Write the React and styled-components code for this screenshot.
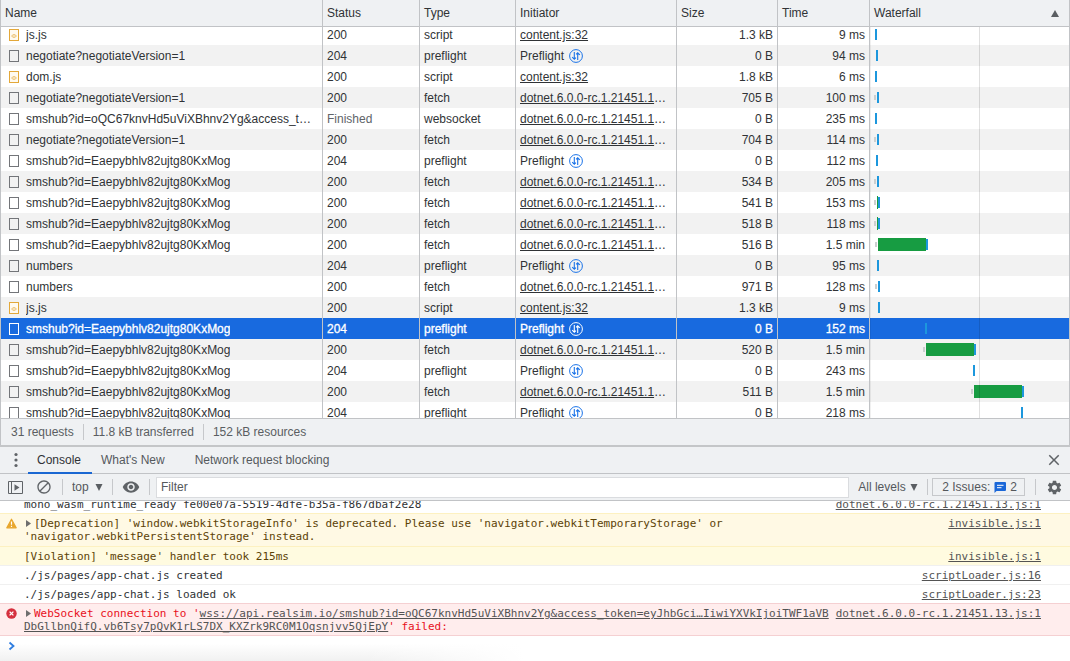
//imports
import React, { useState, useLayoutEffect, useRef } from "react"
import styled, { createGlobalStyle, css } from "styled-components"
import { MdBlock, MdClose, MdSettings, MdVisibility } from "react-icons/md"
//end of imports

const GlobalStyle = createGlobalStyle`
  * {
    box-sizing: border-box;
  }
  body {
    margin: 0;
    background: #fff;
    color: #303336;
    font-family: "Liberation Sans", Arial, sans-serif;
    font-size: 12px;
  }
  button, input, select {
    font: inherit;
    color: inherit;
  }
`

const line = "#c1c3c6"
const bar = "#eff1f3"

//page shell
const Shell = styled.div`
  height: 100vh;
  display: flex;
  flex-direction: column;
  overflow: hidden;
`
const NetworkPanel = styled.section`
  flex: 1;
  min-height: 0;
  display: flex;
  flex-direction: column;
  border-left: 1px solid ${line};
  border-right: 1px solid ${line};
`

//request table
const Scroller = styled.div`
  flex: 1;
  min-height: 0;
  overflow-y: auto;
  scrollbar-width: none;
`
const Table = styled.table`
  width: 100%;
  table-layout: fixed;
  border-collapse: separate;
  border-spacing: 0;
`
const Col = styled.col`
  width: ${(p) => (p.$width ? `${p.$width}px` : "auto")};
`
const HeadCell = styled.th`
  position: sticky;
  top: 0;
  z-index: 1;
  height: 27px;
  padding: 0 4px;
  background: ${bar};
  border-right: 1px solid ${line};
  border-bottom: 1px solid ${line};
  font-weight: 400;
  text-align: left;
  &:last-child {
    border-right: 0;
  }
`
const HeadLabel = styled.div`
  display: flex;
  align-items: center;
  justify-content: space-between;
  padding-right: 6px;
`
const Row = styled.tr`
  height: 21px;
  background: ${(p) => (p.$selected ? "#186adf" : "#fff")};
  color: ${(p) => (p.$selected ? "#fff" : "inherit")};
  -webkit-text-stroke: ${(p) => (p.$selected ? "0.3px #fff" : "0")};
  --icon: ${(p) => (p.$selected ? "#fff" : "#1a73e8")};
  --file: ${(p) => (p.$selected ? "#fff" : "#737579")};
  &:nth-child(even) {
    background: #f2f2f2;
  }
  ${(p) =>
    p.$selected &&
    css`
      &:nth-child(n) {
        background: #186adf;
      }
    `}
`
const Cell = styled.td`
  height: 21px;
  padding: 2px 4px 0;
  border-right: 1px solid ${line};
  line-height: 19px;
  white-space: nowrap;
  overflow: hidden;
  text-overflow: ellipsis;
  text-align: ${(p) => (p.$right ? "right" : "left")};
  color: ${(p) => (p.$muted ? "#606468" : "inherit")};
`
const NameLine = styled.div`
  display: flex;
  align-items: center;
  gap: 7px;
  padding: 0 4px;
`
const NameText = styled.span`
  overflow: hidden;
  text-overflow: ellipsis;
`
const FileBox = styled.svg`
  flex: none;
  display: block;
  margin-bottom: 2px;
`
const SwapSvg = styled.svg`
  margin-left: 5px;
  vertical-align: -3px;
`
const Link = styled.a`
  color: inherit;
  text-decoration: underline;
  text-underline-offset: 1px;
`

//waterfall
const WaterfallCell = styled.td`
  position: relative;
  padding: 0;
  border-left: 1px solid rgba(0, 0, 0, 0.06);
  &::after {
    content: "";
    position: absolute;
    top: 0;
    bottom: 0;
    left: 54.5%;
    width: 1px;
    background: rgba(0, 0, 0, 0.12);
  }
`
const Track = styled.div`
  display: flex;
  align-items: center;
  height: 21px;
`
const Lead = styled.div`
  flex: none;
`
const Queued = styled.div`
  flex: none;
  width: 2px;
  height: 5px;
  margin-right: 1px;
  background: #cccfd0;
`
const Waiting = styled.div`
  flex: none;
  height: 13px;
  background: #179c42;
`
const Download = styled.div`
  flex: none;
  width: 2px;
  height: 11px;
  background: #1c97dd;
`

//summary bar
const Summary = styled.footer`
  display: flex;
  align-items: center;
  height: 27px;
  padding: 0 10px;
  gap: 9px;
  background: ${bar};
  border-top: 1px solid ${line};
  color: #5a5e62;
`
const Divider = styled.span`
  flex: none;
  width: 1px;
  height: 16px;
  background: #c6c8cb;
`

//drawer
const Drawer = styled.section`
  flex: none;
  height: 216px;
  display: flex;
  flex-direction: column;
  border-top: 2px solid #c4c6c8;
`
const TabBar = styled.div`
  flex: none;
  display: flex;
  align-items: stretch;
  height: 27px;
  padding: 0 4px;
  background: ${bar};
  border-bottom: 1px solid ${line};
`
const IconButton = styled.button`
  flex: none;
  display: flex;
  align-items: center;
  justify-content: center;
  width: 24px;
  padding: 0;
  border: 0;
  background: none;
  color: #5f6367;
`
const Tab = styled.button`
  height: 27px;
  padding: 0 11px 0 9px;
  margin-right: ${(p) => (p.$closeable ? "10px" : "0")};
  border: 0;
  border-bottom: 2px solid ${(p) => (p.$active ? "#1a67d2" : "transparent")};
  background: none;
  color: ${(p) => (p.$active ? "#2f3236" : "#55595d")};
`
const Spacer = styled.div`
  flex: ${(p) => (p.$width ? `0 0 ${p.$width}px` : "1")};
`
const Toolbar = styled.div`
  flex: none;
  display: flex;
  align-items: center;
  height: 27px;
  padding: 0 4px;
  background: ${bar};
  border-bottom: 1px solid ${line};
  color: #54585c;
`
const SelectBox = styled.label`
  display: flex;
  align-items: center;
  gap: ${(p) => (p.$tight ? "4px" : "6px")};
  margin: 0 9px;
`
const Select = styled.select`
  appearance: none;
  padding: 0;
  border: 0;
  background: none;
`
const FilterInput = styled.input`
  flex: 1;
  min-width: 0;
  height: 21px;
  margin-left: 6px;
  padding: 0 4px;
  border: 1px solid #dadcdf;
  background: #fff;
  color: #303336;
  outline: 0;
  &::placeholder {
    color: #55585b;
    opacity: 1;
  }
`
const IssuesButton = styled.button`
  display: flex;
  align-items: center;
  gap: 4px;
  height: 18px;
  margin: 0 10px 0 4px;
  padding: 0 7px 0 9px;
  border: 1px solid #c6c8cb;
  background: none;
`

//console messages
const Log = styled.div`
  flex: 1;
  min-height: 0;
  display: flex;
  flex-direction: column;
  justify-content: flex-end;
  overflow: hidden;
  font-family: "DejaVu Sans Mono", monospace;
  font-size: 11px;
  line-height: 13px;
`
const levels = {
  log: { background: "#fff", border: "#f0f0f0", color: "#303336" },
  violation: { background: "#fffbe0", border: "#fdf1c1", color: "#5c4206" },
  warning: { background: "#fff9e4", border: "#fdf1c1", color: "#5c4206" },
  error: { background: "#ffeded", border: "#f5d0d2", color: "#e8101c" },
}
const Message = styled.div`
  flex: none;
  display: flex;
  align-items: flex-start;
  gap: 5px;
  padding: 3px 29px ${(p) => (p.$level === "warning" ? "3px" : "2px")} 6px;
  border-top: 1px solid ${(p) => levels[p.$level].border};
  border-bottom: ${(p) => (p.$level === "error" ? `1px solid ${levels.error.border}` : "0")};
  background: ${(p) => levels[p.$level].background};
  color: ${(p) => levels[p.$level].color};
`
const Gutter = styled.span`
  flex: none;
  display: flex;
  width: 13px;
  height: 13px;
  align-items: center;
`
const MessageText = styled.span`
  flex: 1;
  min-width: 0;
  overflow-wrap: anywhere;
`
const Url = styled(Link)`
  color: #545454;
  word-break: break-all;
`
const Source = styled(Link)`
  flex: none;
  color: #545454;
`
const Expander = styled.svg`
  margin: 0 3px 0 2px;
`
const Prompt = styled.div`
  flex: none;
  display: flex;
  align-items: flex-start;
  height: 25px;
  padding: 5px 8px;
  background: linear-gradient(to right, transparent 34%, #fff 49%),
    linear-gradient(to bottom, #fff 30%, #f1f1f1);
`

//icons
function FileIcon({ script }) {
  if (script) {
    return (
      <FileBox width="10" height="12" viewBox="0 0 10 12" fill="none" stroke="#e3a83a">
        <rect x="0.5" y="0.5" width="9" height="11" fill="#fffaf0" />
        <path d="M4 5.5 2.7 7 4 8.5M6 5.5 7.3 7 6 8.5M4 5.9h2M4 8.1h2" strokeWidth="0.8" />
      </FileBox>
    )
  }
  return (
    <FileBox width="10" height="12" viewBox="0 0 10 12">
      <rect x="0.5" y="0.5" width="9" height="11" fill="none" stroke="var(--file)" />
    </FileBox>
  )
}

function SwapIcon() {
  return (
    <SwapSvg width="14" height="14" viewBox="0 0 14 14" fill="none" stroke="var(--icon)">
      <circle cx="7" cy="7" r="6.4" />
      <path d="M5.3 3v7.2M3.2 8.2l2.1 2.1 1.6-1.6M8.7 11V3.8M7.1 5.4l1.6-1.6 2.1 2.1" strokeWidth="1.1" />
    </SwapSvg>
  )
}

function Triangle({ up }) {
  return (
    <svg width="8" height="7" viewBox="0 0 8 7" fill="#5a5e62">
      <path d={up ? "M4 0 8 7H0z" : "M0.5 0h7L4 7z"} />
    </svg>
  )
}

function ExpandArrow() {
  return (
    <Expander width="5" height="7" viewBox="0 0 5 7" fill="#6e6e6e">
      <path d="M0 0 5 3.5 0 7z" />
    </Expander>
  )
}

function LevelIcon({ level }) {
  if (level === "warning") {
    return (
      <svg width="11" height="11" viewBox="0 0 11 11">
        <path d="M5.5 1.2 10.2 9.8H0.8z" fill="#e8a62c" stroke="#e8a62c" strokeWidth="1.2" strokeLinejoin="round" />
        <path d="M5.5 3.6v3.2M5.5 7.8v1.3" stroke="#fff" strokeWidth="1.2" />
      </svg>
    )
  }
  if (level === "error") {
    return (
      <svg width="11" height="11" viewBox="0 0 11 11">
        <circle cx="5.5" cy="5.5" r="5.2" fill="#d5303e" />
        <path d="M3.6 3.6 7.4 7.4M7.4 3.6 3.6 7.4" stroke="#fff" strokeWidth="1.3" />
      </svg>
    )
  }
  return null
}

//data, waterfall offsets are on a scale of SPAN
const SPAN = 198
const dotnet = "dotnet.6.0.0-rc.1.21451.13.js:1"
const hub = "smshub?id=Eaepybhlv82ujtg80KxMog"
const columns = [
  { label: "Name", width: 322 },
  { label: "Status", width: 97 },
  { label: "Type", width: 96 },
  { label: "Initiator", width: 161 },
  { label: "Size", width: 101 },
  { label: "Time", width: 92 },
  { label: "Waterfall", sorted: true },
]
const requests = [
  { name: "js.js", status: "200", type: "script", from: "content.js:32", size: "1.3 kB", time: "9 ms", start: 4 },
  { name: "negotiate?negotiateVersion=1", status: "204", type: "preflight", size: "0 B", time: "94 ms", start: 5 },
  { name: "dom.js", status: "200", type: "script", from: "content.js:32", size: "1.8 kB", time: "6 ms", start: 4 },
  { name: "negotiate?negotiateVersion=1", status: "200", type: "fetch", from: dotnet, size: "705 B", time: "100 ms", start: 3, queued: true },
  { name: "smshub?id=oQC67knvHd5uViXBhnv2Yg&access_token=eyJhbGci", status: "Finished", type: "websocket", from: dotnet, size: "0 B", time: "235 ms", start: 4 },
  { name: "negotiate?negotiateVersion=1", status: "200", type: "fetch", from: dotnet, size: "704 B", time: "114 ms", start: 3, queued: true },
  { name: hub, status: "204", type: "preflight", size: "0 B", time: "112 ms", start: 5 },
  { name: hub, status: "200", type: "fetch", from: dotnet, size: "534 B", time: "205 ms", start: 3, queued: true },
  { name: hub, status: "200", type: "fetch", from: dotnet, size: "541 B", time: "153 ms", start: 3, queued: true, wait: 1 },
  { name: hub, status: "200", type: "fetch", from: dotnet, size: "518 B", time: "118 ms", start: 3, queued: true, wait: 1 },
  { name: hub, status: "200", type: "fetch", from: dotnet, size: "516 B", time: "1.5 min", start: 4, queued: true, wait: 48 },
  { name: "numbers", status: "204", type: "preflight", size: "0 B", time: "95 ms", start: 6 },
  { name: "numbers", status: "200", type: "fetch", from: dotnet, size: "971 B", time: "128 ms", start: 4, queued: true },
  { name: "js.js", status: "200", type: "script", from: "content.js:32", size: "1.3 kB", time: "9 ms", start: 7 },
  { name: hub, status: "204", type: "preflight", size: "0 B", time: "152 ms", start: 54 },
  { name: hub, status: "200", type: "fetch", from: dotnet, size: "520 B", time: "1.5 min", start: 52, queued: true, wait: 48 },
  { name: hub, status: "204", type: "preflight", size: "0 B", time: "243 ms", start: 102 },
  { name: hub, status: "200", type: "fetch", from: dotnet, size: "511 B", time: "1.5 min", start: 100, queued: true, wait: 48 },
  { name: hub, status: "204", type: "preflight", size: "0 B", time: "218 ms", start: 150 },
]

const percent = (value) => `${(value / SPAN) * 100}%`

function RequestRow({ request, selected, onSelect }) {
  return (
    <Row $selected={selected} onClick={onSelect}>
      <Cell>
        <NameLine>
          <FileIcon script={request.type === "script"} />
          <NameText>{request.name}</NameText>
        </NameLine>
      </Cell>
      <Cell $muted={request.status === "Finished"}>{request.status}</Cell>
      <Cell>{request.type}</Cell>
      <Cell>
        {request.from ? (
          <Link href="#source">{request.from}</Link>
        ) : (
          <>
            Preflight
            <SwapIcon />
          </>
        )}
      </Cell>
      <Cell $right>{request.size}</Cell>
      <Cell $right>{request.time}</Cell>
      <WaterfallCell>
        <Track>
          <Lead style={{ width: percent(request.start) }} />
          {request.queued ? <Queued /> : null}
          {request.wait ? <Waiting style={{ width: percent(request.wait) }} /> : null}
          <Download />
        </Track>
      </WaterfallCell>
    </Row>
  )
}

function Network() {
  const [selected, setSelected] = useState(14)
  const scroller = useRef(null)

  useLayoutEffect(() => {
    scroller.current.scrollTop = 3
  }, [])

  return (
    <NetworkPanel>
      <Scroller ref={scroller}>
        <Table>
          <colgroup>
            {columns.map((column) => (
              <Col key={column.label} $width={column.width} />
            ))}
          </colgroup>
          <thead>
            <tr>
              {columns.map((column) => (
                <HeadCell key={column.label} scope="col">
                  <HeadLabel>
                    {column.label}
                    {column.sorted ? <Triangle up /> : null}
                  </HeadLabel>
                </HeadCell>
              ))}
            </tr>
          </thead>
          <tbody>
            {requests.map((request, index) => (
              <RequestRow
                key={index}
                request={request}
                selected={index === selected}
                onSelect={() => setSelected(index)}
              />
            ))}
          </tbody>
        </Table>
      </Scroller>
      <Summary>
        <span>31 requests</span>
        <Divider />
        <span>11.8 kB transferred</span>
        <Divider />
        <span>152 kB resources</span>
      </Summary>
    </NetworkPanel>
  )
}

function LogMessage({ level = "log", source, children }) {
  const expandable = level === "warning" || level === "error"
  return (
    <Message $level={level}>
      <Gutter>
        <LevelIcon level={level} />
      </Gutter>
      <MessageText>
        {expandable ? <ExpandArrow /> : null}
        {children}
      </MessageText>
      <Source href="#source">{source}</Source>
    </Message>
  )
}

function ConsoleDrawer() {
  const [tab, setTab] = useState("Console")
  const [filter, setFilter] = useState("")

  return (
    <Drawer>
      <TabBar>
        <IconButton aria-label="More tools">
          <svg width="4" height="16" viewBox="0 0 4 16" fill="currentColor">
            <circle cx="2" cy="2.5" r="1.6" />
            <circle cx="2" cy="8" r="1.6" />
            <circle cx="2" cy="13.5" r="1.6" />
          </svg>
        </IconButton>
        {["Console", "What's New", "Network request blocking"].map((label) => (
          <Tab
            key={label}
            $active={tab === label}
            $closeable={label === "What's New"}
            onClick={() => setTab(label)}
          >
            {label}
          </Tab>
        ))}
        <Spacer />
        <IconButton aria-label="Close drawer">
          <MdClose size={18} />
        </IconButton>
      </TabBar>
      <Toolbar>
        <IconButton aria-label="Show console sidebar">
          <svg width="16" height="13" viewBox="0 0 16 13" fill="none" stroke="currentColor">
            <path d="M0.5 0.5h14v12h-14zM3.5 0.5v12" />
            <path d="M6.5 3.2 11.5 6.5 6.5 9.8z" fill="currentColor" stroke="none" />
          </svg>
        </IconButton>
        <Spacer $width={4} />
        <IconButton aria-label="Clear console">
          <MdBlock size={16} />
        </IconButton>
        <Spacer $width={6} />
        <Divider />
        <SelectBox>
          <Select aria-label="Context">
            <option>top</option>
          </Select>
          <Triangle />
        </SelectBox>
        <Divider />
        <Spacer $width={6} />
        <IconButton aria-label="Create live expression">
          <MdVisibility size={18} />
        </IconButton>
        <Spacer $width={6} />
        <Divider />
        <FilterInput
          aria-label="Filter"
          placeholder="Filter"
          value={filter}
          onChange={(e) => setFilter(e.target.value)}
        />
        <SelectBox $tight>
          <Select aria-label="Log levels">
            <option>All levels</option>
          </Select>
          <Triangle />
        </SelectBox>
        <Divider />
        <IssuesButton>
          2 Issues:
          <svg width="12" height="11" viewBox="0 0 12 11">
            <path d="M1.5 0H11a1 1 0 0 1 1 1v7a1 1 0 0 1-1 1H2.5L0.5 11V1a1 1 0 0 1 1-1z" fill="#1a67d8" />
            <path d="M3 3.3h6.5M3 5.7h4.5" stroke="#fff" />
          </svg>
          2
        </IssuesButton>
        <Divider />
        <Spacer $width={6} />
        <IconButton aria-label="Console settings">
          <MdSettings size={17} />
        </IconButton>
      </Toolbar>
      <Log>
        <LogMessage source={dotnet}>
          mono_wasm_runtime_ready fe00e07a-5519-4dfe-b35a-f867dbaf2e28
        </LogMessage>
        <LogMessage level="warning" source="invisible.js:1">
          [Deprecation] 'window.webkitStorageInfo' is deprecated. Please use
          'navigator.webkitTemporaryStorage' or 'navigator.webkitPersistentStorage' instead.
        </LogMessage>
        <LogMessage level="violation" source="invisible.js:1">
          [Violation] 'message' handler took 215ms
        </LogMessage>
        <LogMessage source="scriptLoader.js:16">./js/pages/app-chat.js created</LogMessage>
        <LogMessage source="scriptLoader.js:23">./js/pages/app-chat.js loaded ok</LogMessage>
        <LogMessage level="error" source={dotnet}>
          WebSocket connection to '
          <Url href="#socket">
            wss://api.realsim.io/smshub?id=oQC67knvHd5uViXBhnv2Yg&amp;access_token=eyJhbGci…IiwiYXVkIjoiTWF1aVBDbGllbnQifQ.vb6Tsy7pQvK1rLS7DX_KXZrk9RC0M1Oqsnjvv5QjEpY
          </Url>
          ' failed:
        </LogMessage>
        <Prompt>
          <svg width="8" height="10" viewBox="0 0 8 10" fill="none" stroke="#2f7de0" strokeWidth="1.8">
            <path d="M1.5 1.5 5.5 5 1.5 8.5" />
          </svg>
        </Prompt>
      </Log>
    </Drawer>
  )
}

export default function App() {
  return (
    <Shell>
      <GlobalStyle />
      <Network />
      <ConsoleDrawer />
    </Shell>
  )
}
